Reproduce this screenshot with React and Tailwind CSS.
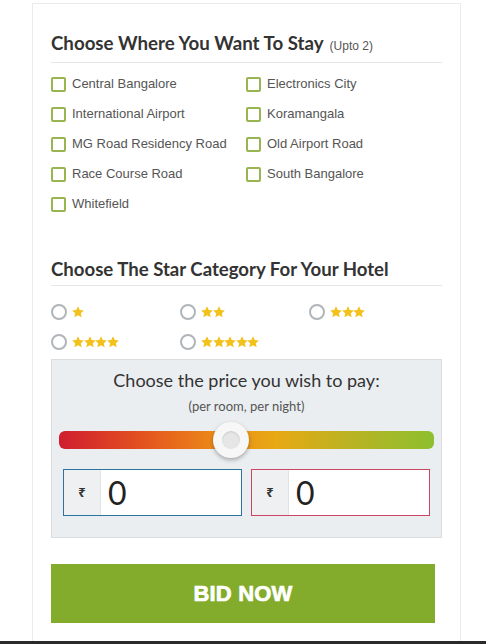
import React, { useState } from "react";

const AREAS = [
  "Central Bangalore",
  "Electronics City",
  "International Airport",
  "Koramangala",
  "MG Road Residency Road",
  "Old Airport Road",
  "Race Course Road",
  "South Bangalore",
  "Whitefield",
];

const Star = () => (
  <svg width="12" height="12" viewBox="0 0 24 24" className="shrink-0 -mr-[0.5px]">
    <path
      fill="#f3c11b"
      d="M12 0.5l3.5 7.4 8.2 0.9-6.1 5.6 1.7 8.1L12 18.4l-7.3 4.1 1.7-8.1L0.3 8.8l8.2-0.9z"
    />
  </svg>
);

const App = () => {
  const [picked, setPicked] = useState([]);
  const [stars, setStars] = useState(null);

  const toggle = (a) =>
    setPicked((p) => (p.includes(a) ? p.filter((x) => x !== a) : p.length < 2 ? [...p, a] : p));

  return (
    <div className="w-[486px] h-[644px] bg-white overflow-hidden flex flex-col">
      <div className="ml-[32px] mt-[3px] w-[429px] flex-1 border border-b-0 border-[#ebebeb] px-[18px] pt-[26px]">
        {/* Where to stay */}
        <div className="flex items-baseline gap-[6px] pb-[6px] border-b border-[#e6e6e6]">
          <h2 className="font-['Lato',sans-serif] font-bold text-[18.7px] leading-[26px] text-[#333]">
            Choose Where You Want To Stay
          </h2>
          <span className="font-['Liberation_Sans',Arial,sans-serif] text-[12px] text-[#555]">(Upto 2)</span>
        </div>
        <div className="grid grid-cols-[195px_1fr] mt-[6px]">
          {AREAS.map((a) => (
            <label key={a} className="h-[30px] flex items-center gap-[6px] cursor-pointer">
              <span
                onClick={() => toggle(a)}
                className={`w-[15px] h-[15px] border-2 border-[#98b552] rounded-[2px] shrink-0 ${
                  picked.includes(a) ? "bg-[#98b552]" : "bg-white"
                }`}
              />
              <span className="font-['Liberation_Sans',Arial,sans-serif] text-[13px] text-[#555]">{a}</span>
            </label>
          ))}
        </div>

        {/* Star category */}
        <h2 className="mt-[37px] pb-[3px] border-b border-[#e6e6e6] font-['Lato',sans-serif] font-bold text-[18.6px] leading-[26px] text-[#333]">
          Choose The Star Category For Your Hotel
        </h2>
        <div className="grid grid-cols-[129px_129px_1fr] mt-[11px]">
          {[1, 2, 3, 4, 5].map((n) => (
            <div
              key={n}
              onClick={() => setStars(n)}
              className="h-[30px] flex items-center gap-[5px] cursor-pointer"
            >
              <span className="w-[16px] h-[16px] rounded-full border-2 border-[#b0b5ba] bg-white flex items-center justify-center">
                {stars === n && <span className="w-[8px] h-[8px] rounded-full bg-[#8fae44]" />}
              </span>
              <span className="flex">
                {Array.from({ length: n }).map((_, i) => (
                  <Star key={i} />
                ))}
              </span>
            </div>
          ))}
        </div>

        {/* Price */}
        <div className="mt-[2px] w-[391px] bg-[#ebeef1] border border-[#d9dde0] pt-[8px] pb-[21px]">
          <div className="text-center font-['Lato',sans-serif] text-[18px] leading-[24px] text-[#333]">
            Choose the price you wish to pay:
          </div>
          <div className="mt-[5px] text-center font-['Lato',sans-serif] text-[13px] leading-[18px] text-[#555]">
            (per room, per night)
          </div>
          <div className="relative mx-[7px] mt-[7px] h-[36px] flex items-center">
            <div className="w-full h-[18px] rounded-[6px] bg-[linear-gradient(to_right,#cf1d2f_0%,#e3521f_22%,#ec8a18_42%,#e7a914_58%,#b9b323_78%,#8dbf2e_100%)]" />
            <div className="absolute left-[154px] top-0 w-[36px] h-[36px] rounded-full bg-[#f7f7f7] shadow-[0_2px_4px_rgba(0,0,0,0.3)] flex items-center justify-center">
              <div className="w-[18px] h-[18px] rounded-full bg-[#e6e6e6] shadow-[inset_0_1px_2px_rgba(0,0,0,0.12)]" />
            </div>
          </div>
          <div className="mt-[11px] px-[11px] flex gap-[9px]">
            <PriceBox frame="bg-[#2b74a0]" />
            <PriceBox frame="bg-[#cc4563]" />
          </div>
        </div>

        <button className="mt-[26px] w-[384px] h-[59px] bg-[#84ac2c] text-white font-['Liberation_Sans',Arial,sans-serif] font-bold text-[22px] tracking-[0.2px] [-webkit-text-stroke:0.7px_white]">
          BID NOW
        </button>
      </div>
      <div className="h-[3px] bg-[#2a2a2a]" />
    </div>
  );
};

// outer div paints the coloured 1px frame
const PriceBox = ({ frame }) => (
  <div className={`w-[179px] h-[47px] p-px ${frame}`}>
    <div className="w-full h-full bg-white flex">
      <div className="w-[37px] bg-[#eef0f2] border-r border-[#e0e3e6] flex items-center justify-center font-['Noto_Sans',sans-serif] font-bold text-[13px] text-[#333]">
        ₹
      </div>
      <div className="flex-1 flex items-center pl-[7px] font-['Lato',sans-serif] text-[32px] text-[#222]">
        0
      </div>
    </div>
  </div>
);

export default App;
